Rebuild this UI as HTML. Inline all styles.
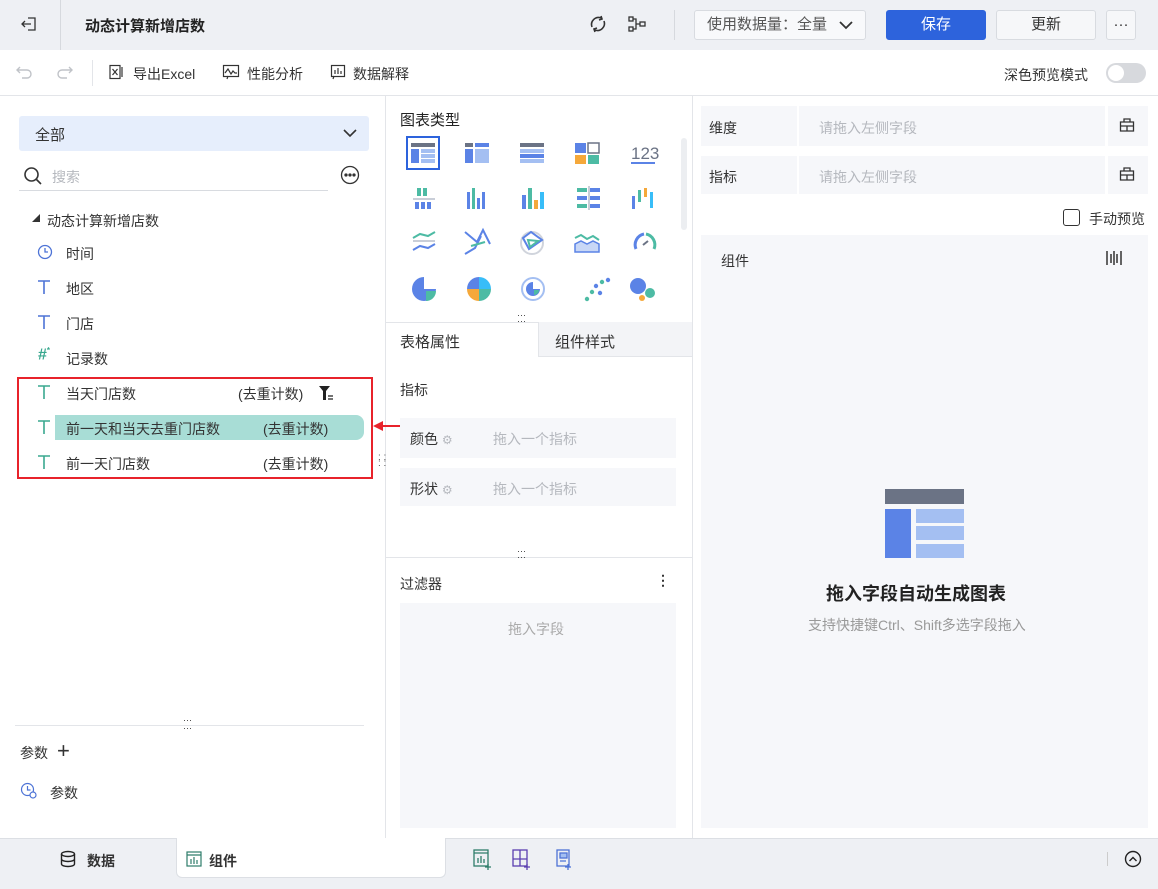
<!DOCTYPE html>
<html><head><meta charset="utf-8"><style>
*{box-sizing:border-box;margin:0;padding:0}
body{width:1158px;height:889px;position:relative;overflow:hidden;font-family:"Liberation Sans","Noto Sans CJK SC",sans-serif;font-size:14px;color:#333;background:#fff}
.a{position:absolute}
.top{left:0;top:0;width:1158px;height:50px;background:#eef0f4}
.btn{border:1px solid #d8dbe0;border-radius:3px;background:#f6f7f9;text-align:center;line-height:28px;font-size:15px}
.ph{color:#b5b8be}
.box{background:#f6f7fa}
.t{font-size:16px;font-weight:300}
</style></head><body>
<div class="a top"></div>
<div class="a" style="left:60px;top:0;width:1px;height:50px;background:#d6d9de"></div>
<svg class="a" style="left:20px;top:14px" width="20" height="20" viewBox="0 0 20 20" fill="none" stroke="#333" stroke-width="1.3"><path d="M8 4h7v12H8M2 10h9M5 7l-3 3 3 3"/></svg>
<div class="a" style="left:85px;top:15px;font-size:15px;font-weight:bold;color:#222">动态计算新增店数</div>
<svg class="a" style="left:588px;top:14px" width="20" height="20" viewBox="0 0 20 20" fill="none" stroke="#333" stroke-width="1.6"><path d="M4 13a7 7 0 0 1 9-9M16 7a7 7 0 0 1-9 9"/><path d="M13 2l1 3-3 1M7 18l-1-3 3-1"/></svg>
<svg class="a" style="left:627px;top:14px" width="20" height="20" viewBox="0 0 20 20" fill="none" stroke="#333" stroke-width="1.3"><rect x="2" y="3" width="4" height="4"/><rect x="2" y="13" width="4" height="4"/><rect x="13" y="8" width="5" height="4"/><path d="M6 5h3v10H6M9 10h4"/></svg>
<div class="a" style="left:674px;top:10px;width:1px;height:30px;background:#d6d9de"></div>
<div class="a btn" style="left:694px;top:10px;width:172px;height:30px;background:#f8f9fb;text-align:left;padding-left:12px;color:#555">使用数据量：全量<svg style="position:absolute;left:143px;top:8px" width="16" height="12" viewBox="0 0 16 12" fill="none" stroke="#333" stroke-width="1.8"><path d="M2 3l6 6 6-6"/></svg></div>
<div class="a btn" style="left:886px;top:10px;width:100px;height:30px;background:#2d63dc;border-color:#2d63dc;color:#fff">保存</div>
<div class="a btn" style="left:996px;top:10px;width:100px;height:30px">更新</div>
<div class="a btn" style="left:1106px;top:10px;width:30px;height:30px;line-height:28px">···</div>

<div class="a" style="left:0;top:95px;width:1158px;height:1px;background:#e3e5e9"></div>
<svg class="a" style="left:16px;top:64px" width="18" height="16" viewBox="0 0 18 16" fill="none" stroke="#c0c3c8" stroke-width="1.4"><path d="M4 3L1 6l3 3M1 6h10a4 4 0 0 1 0 8H6"/></svg>
<svg class="a" style="left:55px;top:64px" width="18" height="16" viewBox="0 0 18 16" fill="none" stroke="#c0c3c8" stroke-width="1.4"><path d="M14 3l3 3-3 3M17 6H7a4 4 0 0 0 0 8h5"/></svg>
<div class="a" style="left:92px;top:60px;width:1px;height:26px;background:#e3e5e9"></div>
<svg class="a" style="left:108px;top:64px" width="16" height="16" viewBox="0 0 16 16" fill="none" stroke="#333" stroke-width="1.2"><rect x="2" y="1.5" width="10" height="13"/><path d="M4.5 5l5 6M9.5 5l-5 6M14 3v10"/></svg>
<div class="a" style="left:133px;top:64px">导出Excel</div>
<svg class="a" style="left:222px;top:64px" width="18" height="16" viewBox="0 0 18 16" fill="none" stroke="#333" stroke-width="1.2"><rect x="1.5" y="1.5" width="15" height="11"/><path d="M3 9l3-4 3 5 2-3 2 2h2M6 12l-1 3"/></svg>
<div class="a" style="left:247px;top:64px">性能分析</div>
<svg class="a" style="left:330px;top:64px" width="16" height="16" viewBox="0 0 16 16" fill="none" stroke="#333" stroke-width="1.2"><rect x="1.5" y="1.5" width="13" height="11"/><path d="M5 10V6M8 10V4M11 10V7M4 12l-1 3"/></svg>
<div class="a" style="left:353px;top:64px">数据解释</div>
<div class="a" style="left:1004px;top:65px;font-size:14px">深色预览模式</div>
<div class="a" style="left:1106px;top:63px;width:40px;height:20px;border-radius:10px;background:#d7d9dd"><div style="position:absolute;left:2px;top:2px;width:16px;height:16px;border-radius:50%;background:#fff"></div></div>

<!-- left -->
<div class="a" style="left:385px;top:96px;width:1px;height:742px;background:#e3e5e9"></div>
<div class="a" style="left:19px;top:116px;width:350px;height:35px;background:#e6eefc;border-radius:3px;padding:8px 16px;font-size:15px">全部<svg style="position:absolute;right:12px;top:12px" width="14" height="10" viewBox="0 0 14 10" fill="none" stroke="#333" stroke-width="1.6"><path d="M1 2l6 6 6-6"/></svg></div>
<svg class="a" style="left:23px;top:166px" width="20" height="20" viewBox="0 0 20 20" fill="none" stroke="#333" stroke-width="1.6"><circle cx="8.5" cy="8.5" r="6.5"/><path d="M13.5 13.5l4.5 4.5"/></svg>
<div class="a ph" style="left:52px;top:167px">搜索</div>
<div class="a" style="left:19px;top:190px;width:309px;height:1px;background:#d8dbe0"></div>
<svg class="a" style="left:340px;top:165px" width="20" height="20" viewBox="0 0 20 20" fill="none" stroke="#333" stroke-width="1.3"><circle cx="10" cy="10" r="8.5"/><circle cx="6" cy="10" r="1" fill="#333"/><circle cx="10" cy="10" r="1" fill="#333"/><circle cx="14" cy="10" r="1" fill="#333"/></svg>
<div class="a" style="left:32px;top:213px;font-size:8px">◢</div>
<div class="a" style="left:47px;top:211px">动态计算新增店数</div>
<svg class="a" style="left:37px;top:244px" width="16" height="16" viewBox="0 0 16 16" fill="none" stroke="#4d73d6" stroke-width="1.3"><circle cx="8" cy="8" r="6.5"/><path d="M8 4v4h3"/></svg>
<div class="a" style="left:66px;top:244px">时间</div>
<svg class="a" style="left:37px;top:280px" width="14" height="14" stroke="#4d73d6" stroke-width="1.6"><path d="M1 1h12M7 1v13"/></svg><div class="a" style="left:66px;top:279px">地区</div>
<svg class="a" style="left:37px;top:315px" width="14" height="14" stroke="#4d73d6" stroke-width="1.6"><path d="M1 1h12M7 1v13"/></svg><div class="a" style="left:66px;top:314px">门店</div>
<div class="a" style="left:38px;top:346px;color:#3aa88f;font-size:16px;font-weight:bold">#<sup style="font-size:8px">*</sup></div><div class="a" style="left:66px;top:349px">记录数</div>
<div class="a" style="left:17px;top:377px;width:356px;height:102px;border:2px solid #e8232b"></div>
<div class="a" style="left:55px;top:415px;width:309px;height:25px;background:#a8ddd6;border-radius:0 8px 8px 0"></div>
<svg class="a" style="left:37px;top:385px" width="14" height="14" stroke="#3aa88f" stroke-width="1.6"><path d="M1 1h12M7 1v13"/></svg><div class="a" style="left:66px;top:384px">当天门店数</div><div class="a" style="left:238px;top:384px">(去重计数)</div>
<svg class="a" style="left:318px;top:385px" width="18" height="16" viewBox="0 0 18 16"><path d="M1 1h11L8 6v9H5V6z" fill="#222"/><path d="M10 11h5M10 14h5" stroke="#222" stroke-width="1.2"/></svg>
<svg class="a" style="left:37px;top:420px" width="14" height="14" stroke="#3aa88f" stroke-width="1.6"><path d="M1 1h12M7 1v13"/></svg><div class="a" style="left:66px;top:419px">前一天和当天去重门店数</div><div class="a" style="left:263px;top:419px">(去重计数)</div>
<svg class="a" style="left:37px;top:455px" width="14" height="14" stroke="#3aa88f" stroke-width="1.6"><path d="M1 1h12M7 1v13"/></svg><div class="a" style="left:66px;top:454px">前一天门店数</div><div class="a" style="left:263px;top:454px">(去重计数)</div>
<div class="a" style="left:376px;top:425px;width:40px;height:2px;background:#e8232b"></div>
<svg class="a" style="left:373px;top:420px" width="10" height="12"><path d="M0 6l10-5v10z" fill="#e8232b"/></svg>
<div class="a" style="left:378px;top:455px;font-size:10px;line-height:6px;color:#555">: :<br>: :</div>
<div class="a" style="left:15px;top:725px;width:349px;height:1px;background:#e3e5e9"></div>
<div class="a" style="left:183px;top:716px;font-size:9px;line-height:8px;color:#333">···<br>···</div>
<div class="a" style="left:20px;top:743px">参数</div><div class="a" style="left:57px;top:738px;font-size:22px;font-weight:300">+</div>
<svg class="a" style="left:20px;top:782px" width="18" height="18" viewBox="0 0 18 18" fill="none" stroke="#4d73d6" stroke-width="1.2"><circle cx="7.5" cy="7.5" r="6"/><path d="M7.5 4v4h3"/><circle cx="13" cy="13" r="3" fill="#fff"/></svg>
<div class="a" style="left:50px;top:783px">参数</div>

<!-- middle -->
<div class="a" style="left:692px;top:96px;width:1px;height:742px;background:#e3e5e9"></div>
<div class="a" style="left:400px;top:109px;font-size:15px;color:#222">图表类型</div>
<div class="a" style="left:681px;top:138px;width:6px;height:92px;border-radius:3px;background:#eceef1"></div>
<div class="a" style="left:406px;top:136px;width:34px;height:34px;border:2px solid #2d63dc"></div>
<svg class="a" style="left:405px;top:136px" width="270" height="170" viewBox="0 0 270 170">
<g transform="translate(6,7)"><rect width="24" height="4" fill="#6b7385"/><rect y="6" width="8" height="14" fill="#5b83e6"/><rect x="10" y="6" width="14" height="4" fill="#a4bff2"/><rect x="10" y="11" width="14" height="4" fill="#a4bff2"/><rect x="10" y="16" width="14" height="4" fill="#a4bff2"/></g>
<g transform="translate(60,7)"><rect width="8" height="4" fill="#6b7385"/><rect x="10" width="14" height="4" fill="#5b83e6"/><rect y="6" width="8" height="14" fill="#5b83e6"/><rect x="10" y="6" width="14" height="14" fill="#a4bff2"/></g>
<g transform="translate(115,7)"><rect width="24" height="4" fill="#6b7385"/><rect y="6" width="24" height="4" fill="#a4bff2"/><rect y="11" width="24" height="4" fill="#5b83e6"/><rect y="16" width="24" height="4" fill="#a4bff2"/></g>
<g transform="translate(170,7)"><rect width="11" height="10" fill="#5b83e6"/><rect x="13" width="11" height="10" fill="none" stroke="#6b7385" stroke-width="1.5"/><rect y="12" width="11" height="9" fill="#f5a83a"/><rect x="13" y="12" width="11" height="9" fill="#4dbba4"/></g>
<text x="226" y="23" font-size="17" fill="#6b7385" font-family="Liberation Sans">123</text><rect x="226" y="26" width="24" height="2" fill="#5b83e6"/>
<g transform="translate(8,52)"><rect x="4" width="4" height="8" fill="#4dbba4"/><rect x="10" y="0" width="4" height="8" fill="#4dbba4"/><rect y="10" width="22" height="2" fill="#c9ced8"/><rect x="2" y="14" width="4" height="7" fill="#5b83e6"/><rect x="8" y="14" width="4" height="7" fill="#5b83e6"/><rect x="14" y="14" width="4" height="7" fill="#5b83e6"/></g>
<g transform="translate(62,52)"><rect x="0" y="4" width="3" height="17" fill="#5b83e6"/><rect x="5" y="0" width="3" height="21" fill="#4dbba4"/><rect x="10" y="10" width="3" height="11" fill="#5b83e6"/><rect x="15" y="4" width="3" height="17" fill="#5b83e6"/></g>
<g transform="translate(117,52)"><rect x="0" y="7" width="4" height="14" fill="#5b83e6"/><rect x="6" y="0" width="4" height="21" fill="#4dbba4"/><rect x="12" y="12" width="4" height="9" fill="#f5a83a"/><rect x="18" y="4" width="4" height="17" fill="#38bdf8"/></g>
<g transform="translate(172,52)"><rect width="10" height="4" fill="#4dbba4"/><rect x="13" width="10" height="4" fill="#5b83e6"/><rect y="8" width="10" height="4" fill="#5b83e6"/><rect x="13" y="8" width="10" height="4" fill="#5b83e6"/><rect y="16" width="10" height="4" fill="#4dbba4"/><rect x="13" y="16" width="10" height="4" fill="#5b83e6"/><rect x="11" y="-2" width="2" height="24" fill="#c9ced8"/></g>
<g transform="translate(227,52)"><rect x="0" y="8" width="3" height="13" fill="#5b83e6"/><rect x="6" y="2" width="3" height="12" fill="#4dbba4"/><rect x="12" y="0" width="3" height="9" fill="#f5a83a"/><rect x="18" y="4" width="3" height="16" fill="#38bdf8"/></g>
<g fill="none" stroke-width="2"><path d="M8 102l7-4 8 2 7-4" stroke="#4dbba4"/><path d="M8 114l7-4 8 2 7-4" stroke="#5b83e6"/><rect x="8" y="104" width="22" height="2" fill="#c9ced8" stroke="none"/>
<path d="M60 96l12 10 6-12 7 14M60 118l10-6 6-12" stroke="#5b83e6"/><path d="M66 110l14-4" stroke="#4dbba4"/>
<circle cx="127" cy="107" r="11" stroke="#d0d4dc"/><path d="M118 102l8-6 11 8-13 9z" stroke="#5b83e6"/><path d="M123 104l10 1-8 6z" stroke="#4dbba4"/>
<path d="M170 102l6-3 6 4 6-3 6 4" stroke="#4dbba4"/><path d="M170 108l6-3 6 3 6-3 6 3v8h-24z" fill="#c8d7f6" stroke="#5b83e6" stroke-width="1.5"/>
<path d="M231 113a11 11 0 0 1 8-15" stroke="#5b83e6" stroke-width="3"/><path d="M241 98a11 11 0 0 1 8 15" stroke="#4dbba4" stroke-width="3"/><path d="M238 109l5-4" stroke="#6b7385"/></g>
<g transform="translate(7,141)"><path d="M12 12V0a12 12 0 1 0 12 12z" fill="#5b83e6"/><path d="M14 14h10a10 10 0 0 1-10 10z" fill="#4dbba4"/></g>
<g transform="translate(62,141)"><path d="M12 12V0A12 12 0 0 0 0 12z" fill="#5b83e6"/><path d="M12 12V0a12 12 0 0 1 12 12z" fill="#38bdf8"/><path d="M12 12H0a12 12 0 0 0 12 12z" fill="#f5a83a"/><path d="M12 12h12a12 12 0 0 1-12 12z" fill="#4dbba4"/></g>
<g transform="translate(116,141)"><circle cx="12" cy="12" r="11" fill="none" stroke="#a4bff2" stroke-width="2"/><path d="M12 12V5a7 7 0 1 0 7 7z" fill="#5b83e6"/><path d="M13 13h5a5 5 0 0 1-5 5z" fill="#4dbba4"/></g>
<g><circle cx="197" cy="146" r="2.2" fill="#4dbba4"/><circle cx="203" cy="144" r="2.2" fill="#5b83e6"/><circle cx="191" cy="150" r="2.2" fill="#5b83e6"/><circle cx="187" cy="156" r="2.2" fill="#4dbba4"/><circle cx="195" cy="157" r="2.2" fill="#5b83e6"/><circle cx="182" cy="163" r="2.2" fill="#4dbba4"/></g>
<circle cx="233" cy="150" r="8" fill="#5b83e6"/><circle cx="245" cy="157" r="5" fill="#4dbba4"/><circle cx="237" cy="162" r="3" fill="#f5a83a"/>
</svg>
<div class="a" style="left:517px;top:312px;font-size:9px;line-height:6px;color:#333">···<br>···</div>
<div class="a" style="left:386px;top:322px;width:306px;height:1px;background:#e3e5e9"></div>
<div class="a" style="left:538px;top:322px;width:154px;height:35px;background:#f3f4f7;border-left:1px solid #e3e5e9;border-bottom:1px solid #e3e5e9"></div>
<div class="a" style="left:400px;top:331px;font-size:15px">表格属性</div>
<div class="a" style="left:555px;top:331px;font-size:15px">组件样式</div>
<div class="a" style="left:400px;top:380px">指标</div>
<div class="a box" style="left:400px;top:418px;width:276px;height:40px"></div>
<div class="a" style="left:410px;top:429px">颜色 <span class="ph" style="font-size:12px">⚙</span></div><div class="a ph" style="left:493px;top:429px">拖入一个指标</div>
<div class="a box" style="left:400px;top:468px;width:276px;height:38px"></div>
<div class="a" style="left:410px;top:479px">形状 <span class="ph" style="font-size:12px">⚙</span></div><div class="a ph" style="left:493px;top:479px">拖入一个指标</div>
<div class="a" style="left:386px;top:557px;width:306px;height:1px;background:#e3e5e9"></div>
<div class="a" style="left:517px;top:548px;font-size:9px;line-height:6px;color:#333">···<br>···</div>
<div class="a" style="left:400px;top:574px">过滤器</div><div class="a" style="left:656px;top:572px;font-weight:bold">⋮</div>
<div class="a box" style="left:400px;top:603px;width:276px;height:225px"></div>
<div class="a ph" style="left:508px;top:619px;color:#aaa">拖入字段</div>

<!-- right -->
<div class="a box" style="left:701px;top:106px;width:96px;height:40px"></div><div class="a box" style="left:799px;top:106px;width:306px;height:40px"></div><div class="a box" style="left:1108px;top:106px;width:40px;height:40px"></div>
<div class="a" style="left:709px;top:118px">维度</div><div class="a ph" style="left:819px;top:118px">请拖入左侧字段</div>
<div class="a box" style="left:701px;top:156px;width:96px;height:38px"></div><div class="a box" style="left:799px;top:156px;width:306px;height:38px"></div><div class="a box" style="left:1108px;top:156px;width:40px;height:38px"></div>
<div class="a" style="left:709px;top:167px">指标</div><div class="a ph" style="left:819px;top:167px">请拖入左侧字段</div>
<svg class="a" style="left:1119px;top:117px" width="16" height="16" viewBox="0 0 16 16" fill="none" stroke="#333" stroke-width="1.3"><path d="M5 5V2h6v3M1.5 5h13v9h-13zM1.5 9h13M8 9v5"/></svg>
<svg class="a" style="left:1119px;top:166px" width="16" height="16" viewBox="0 0 16 16" fill="none" stroke="#333" stroke-width="1.3"><path d="M5 5V2h6v3M1.5 5h13v9h-13zM1.5 9h13M8 9v5"/></svg>
<div class="a" style="left:1063px;top:209px;width:17px;height:17px;border:1.3px solid #333;border-radius:3px"></div>
<div class="a" style="left:1089px;top:209px">手动预览</div>
<div class="a box" style="left:701px;top:235px;width:447px;height:593px"></div>
<div class="a" style="left:721px;top:251px">组件</div>
<svg class="a" style="left:1105px;top:250px" width="18" height="16" viewBox="0 0 18 16" stroke="#333" stroke-width="1.5"><path d="M2 1v14M6 4v9M9 1v14M12 4v9M16 1v14"/></svg>
<svg class="a" style="left:885px;top:489px" width="80" height="70"><rect width="79" height="15" fill="#6b7385"/><rect y="20" width="26" height="49" fill="#5b83e6"/><rect x="31" y="20" width="48" height="14" fill="#a4bff2"/><rect x="31" y="37" width="48" height="14" fill="#a4bff2"/><rect x="31" y="55" width="48" height="14" fill="#a4bff2"/></svg>
<div class="a" style="left:826px;top:580px;font-size:18px;font-weight:bold;color:#222">拖入字段自动生成图表</div>
<div class="a" style="left:808px;top:615px;font-size:14px;color:#999">支持快捷键Ctrl、Shift多选字段拖入</div>

<!-- bottom -->
<div class="a" style="left:0;top:838px;width:1158px;height:51px;background:#eef0f4;border-top:1px solid #dcdfe4"></div>
<div class="a" style="left:176px;top:838px;width:270px;height:40px;background:#fff;border-radius:0 0 6px 6px;border:1px solid #dcdfe4;border-top:none"></div>
<svg class="a" style="left:59px;top:850px" width="18" height="18" viewBox="0 0 18 18" fill="none" stroke="#222" stroke-width="1.4"><ellipse cx="9" cy="4" rx="6.5" ry="2.5"/><path d="M2.5 4v10c0 1.5 3 2.5 6.5 2.5s6.5-1 6.5-2.5V4M2.5 9c0 1.5 3 2.5 6.5 2.5s6.5-1 6.5-2.5"/></svg>
<div class="a" style="left:87px;top:851px;font-weight:bold">数据</div>
<svg class="a" style="left:186px;top:851px" width="16" height="16" viewBox="0 0 16 16" fill="none" stroke="#2e7d6a" stroke-width="1.2"><rect x="1" y="1" width="14" height="14"/><path d="M1 4h14M5 13V8M8 13V6M11 13V9"/></svg>
<div class="a" style="left:209px;top:851px;font-weight:bold">组件</div>
<svg class="a" style="left:473px;top:849px" width="110" height="22" fill="none" stroke-width="1.3"><g stroke="#2e7d6a"><rect x="1" y="1" width="14" height="16"/><path d="M1 4h14M5 14V9M8 14V7M11 14V10M15 15v6M12 18h6"/></g><g stroke="#5b3fb0"><rect x="40" y="1" width="14" height="16"/><path d="M40 10h14M47 1v16M54 15v6M51 18h6"/></g><g stroke="#4d73d6"><rect x="84" y="1" width="12" height="16"/><rect x="87" y="4" width="7" height="5" fill="#a4bff2"/><path d="M87 12h6M95 15v6M92 18h6"/></g></svg>
<div class="a" style="left:1107px;top:852px;width:1px;height:14px;background:#ccc"></div>
<svg class="a" style="left:1124px;top:850px" width="18" height="18" viewBox="0 0 18 18" fill="none" stroke="#222" stroke-width="1.4"><circle cx="9" cy="9" r="7.5"/><path d="M5.5 11l3.5-3.5 3.5 3.5"/></svg>
</body></html>
